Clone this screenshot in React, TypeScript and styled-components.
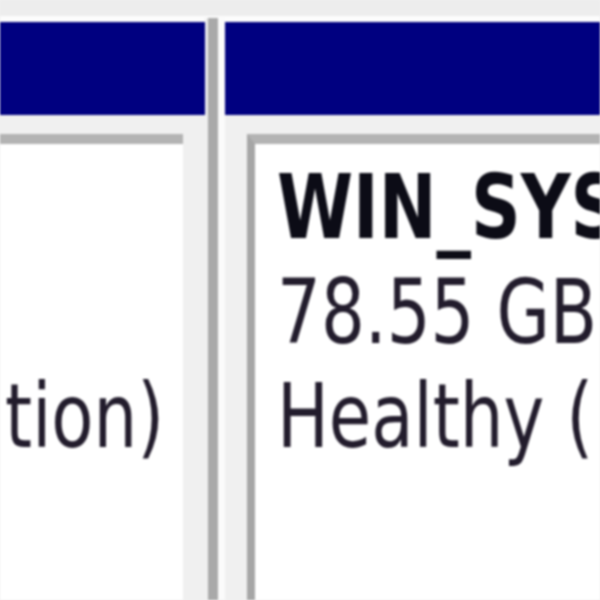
import React from "react";
import styled, { createGlobalStyle } from "styled-components";

const GlobalStyle = createGlobalStyle`
  html, body {
    margin: 0;
    padding: 0;
    background: #f0f0f0;
    overflow: hidden;
  }
`;

const navy = "#000080";

type Volume = {
  label: string;
  size: string;
  status: string;
};

const systemReserved: Volume = {
  label: "System Reserved",
  size: "500 MB NTFS",
  status: "Healthy (System, Active, Primary Partition)",
};

const winSystem: Volume = {
  label: "WIN_SYSTEM (C:)",
  size: "78.55 GB NTFS",
  status: "Healthy (Boot, Page File, Crash Dump, Primary Partition)",
};

const VolumeText = ({ volume, align }: { volume: Volume; align: "left" | "right" }) => (
  <TextBlock $align={align}>
    <Label>{volume.label}</Label>
    <Line>{volume.size}</Line>
    <Line>{volume.status}</Line>
  </TextBlock>
);

const App = () => {
  return (
    <>
      <GlobalStyle />
      <Window>
        <TopStrip />
        <Panes>
          <Pane $width={205}>
            <Header />
            <PaneBody $side="left">
              <VolumeBox $side="left">
                <VolumeText volume={systemReserved} align="right" />
              </VolumeBox>
            </PaneBody>
          </Pane>
          <Sash />
          <Pane>
            <Header />
            <PaneBody $side="right">
              <VolumeBox $side="right">
                <VolumeText volume={winSystem} align="left" />
              </VolumeBox>
            </PaneBody>
          </Pane>
        </Panes>
      </Window>
    </>
  );
};

const Window = styled.div`
  width: 600px;
  height: 600px;
  display: flex;
  flex-direction: column;
  overflow: hidden;
  background: #f0f0f0;
  filter: blur(1.2px);
`;

const TopStrip = styled.div`
  height: 16px;
  background: #ededed;
  border-bottom: 6px solid #fcfcfc;
  flex-shrink: 0;
`;

const Panes = styled.div`
  flex: 1;
  display: flex;
  min-height: 0;
`;

const Pane = styled.div<{ $width?: number }>`
  display: flex;
  flex-direction: column;
  ${(p) => (p.$width ? `width: ${p.$width}px; flex-shrink: 0;` : "flex: 1; min-width: 0;")}
`;

const Header = styled.div`
  height: 93px;
  background: ${navy};
  flex-shrink: 0;
`;

const Sash = styled.div`
  width: 20px;
  flex-shrink: 0;
  margin-top: -4px;
  background: linear-gradient(
    to right,
    #f0f0f0 0 3px,
    #a9a9a9 3px 13px,
    #fbfbfb 13px 20px
  );
`;

const PaneBody = styled.div<{ $side: "left" | "right" }>`
  flex: 1;
  display: flex;
  min-height: 0;
  padding-top: 19px;
  ${(p) => (p.$side === "left" ? "padding-right: 22px;" : "padding-left: 22px;")}
`;

const VolumeBox = styled.div<{ $side: "left" | "right" }>`
  flex: 1;
  min-width: 0;
  display: flex;
  justify-content: ${(p) => (p.$side === "left" ? "flex-end" : "flex-start")};
  overflow: hidden;
  background: #ffffff;
  border-top: 10px solid #b3b3b3;
  ${(p) => (p.$side === "right" ? "border-left: 8px solid #a6a6a6;" : "")}
  padding: 11px ${(p) => (p.$side === "left" ? "19px" : "0")} 0
    ${(p) => (p.$side === "right" ? "22px" : "0")};
`;

const TextBlock = styled.div<{ $align: "left" | "right" }>`
  flex-shrink: 0;
  font-family: "DejaVu Sans", "Open Sans", sans-serif;
  font-size: 89px;
  line-height: 104.5px;
  white-space: nowrap;
  transform: scaleX(0.775);
  transform-origin: ${(p) => (p.$align === "left" ? "left top" : "right top")};
`;

const Label = styled.div`
  font-weight: 700;
  color: #0c0c16;
`;

const Line = styled.div`
  font-weight: 400;
  color: #221c2c;
`;

export default App;
